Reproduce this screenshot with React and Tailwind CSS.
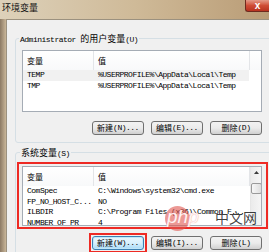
const mono = "font-['Liberation_Mono',monospace] text-[8px] tracking-[-0.5px]";

function Mix({ text, cjk = "text-[8px]" }) {
  const parts = text.split(/([\u4e00-\u9fff]+)/).filter(Boolean);
  return (
    <>
      {parts.map((p, i) =>
        /[\u4e00-\u9fff]/.test(p) ? (
          <span key={i} className={`font-['Noto_Sans_CJK_SC',sans-serif] tracking-normal ${cjk}`}>{p}</span>
        ) : (
          <span key={i} className={mono}>{p}</span>
        )
      )}
    </>
  );
}

function Button({ label, focus }) {
  return (
    <div
      className={`w-[52px] h-[14px] rounded-[3px] border flex items-center justify-center whitespace-nowrap leading-[12px] text-black ${
        focus
          ? "border-[#3c7fb1] bg-gradient-to-b from-[#eaf6fd] via-[#d9f0fc] to-[#a7d9f5] shadow-[inset_0_0_0_1px_#bfe6f9]"
          : "border-[#707070] bg-gradient-to-b from-[#f2f2f2] via-[#ebebeb] to-[#d0d0d0]"
      }`}
    >
      <Mix text={label} />
    </div>
  );
}

function ListView({ rows, height, scroll, selected }) {
  return (
    <div className={`w-[240px] ${height} border border-[#a5acb5] bg-white flex overflow-hidden`}>
      <div className="flex-1 flex flex-col">
        <div className="h-[19px] shrink-0 flex bg-gradient-to-b from-white to-[#f8f9fa]">
          <div className="w-[71px] border-r border-[#e3e5e8] pl-[4px] flex items-center">
            <Mix text="变量" />
          </div>
          <div className="w-[156px] border-r border-[#e3e5e8] pl-[4px] flex items-center">
            <Mix text="值" />
          </div>
        </div>
        {rows.map(([name, value], i) => (
          <div
            key={name}
            className={`h-[10.5px] shrink-0 flex items-center whitespace-nowrap leading-[10.5px] text-black ${
              selected === i ? "bg-[#f1f1f1] w-[226px]" : ""
            }`}
          >
            <div className={`w-[71px] pl-[4px] overflow-hidden ${mono}`}>{name}</div>
            <div className={`pl-[4px] ${mono}`}>{value}</div>
          </div>
        ))}
      </div>
      {scroll && (
        <div className="w-[12px] shrink-0 border-l border-[#e6e6e6] bg-gradient-to-r from-[#ebebeb] to-[#f6f6f6] flex flex-col items-center">
          <div className="h-[11px] w-full flex items-center justify-center">
            <svg width="5" height="3" viewBox="0 0 5 3">
              <path d="M0 3 L2.5 0 L5 3 Z" fill="#3a3a3a" />
            </svg>
          </div>
          <div className="mt-[5px] w-[11px] h-[11px] rounded-[2px] border border-[#9a9a9a] bg-gradient-to-r from-[#f7f7f7] to-[#dedede]" />
        </div>
      )}
    </div>
  );
}

export default function App() {
  return (
    <div className="relative w-[269px] h-[252px] overflow-hidden flex flex-col bg-gradient-to-r from-[#ddd1ba] via-[#cfba98] to-[#b99c76]">
      <div className="h-[19px] shrink-0 flex justify-between items-start">
        <div className="pl-[2px] pt-[2px] text-[9px] leading-[11px] text-[#111] font-['Noto_Sans_CJK_SC',sans-serif]">
          环境变量
        </div>
        <div className="w-[24px] h-[12px] rounded-bl-[3px] border-l border-b border-[#6e2a1e] bg-gradient-to-b from-[#e39a88] via-[#cf4d36] to-[#b8321f] flex items-center justify-center text-white text-[10px] leading-[10px] font-bold font-['Liberation_Sans',sans-serif]">
          x
        </div>
      </div>
      <div className="flex-1 flex">
        <div className="w-[6px] shrink-0 bg-gradient-to-r from-[#8c7a64] to-[#c9b699]" />
        <div className="flex-1 bg-[#f0f0f0] border-l border-t border-[#9b917f] pl-[8px]">
          <fieldset className="mt-[11px] w-[262px] border border-[#d5dfe5] rounded-[3px] pb-[7px]">
            <legend className="ml-[3px] px-[1px] leading-[10px] text-black whitespace-nowrap">
              <Mix text="Administrator 的用户变量(U)" cjk="text-[9px]" />
            </legend>
            <div className="ml-[6px] mt-[5px] w-[240px]">
              <ListView
                height="h-[62px]"
                selected={0}
                rows={[
                  ["TEMP", "%USERPROFILE%\\AppData\\Local\\Temp"],
                  ["TMP", "%USERPROFILE%\\AppData\\Local\\Temp"],
                ]}
              />
              <div className="mt-[9px] flex">
                <div className="ml-[70px]"><Button label="新建(N)..." /></div>
                <div className="ml-[7px]"><Button label="编辑(E)..." /></div>
                <div className="ml-[7px]"><Button label="删除(D)" /></div>
              </div>
            </div>
          </fieldset>
          <fieldset className="mt-[2px] w-[262px] border border-[#d5dfe5] rounded-[3px] pb-[4px]">
            <legend className="ml-[4px] px-[1px] leading-[10px] text-black whitespace-nowrap">
              <Mix text="系统变量(S)" cjk="text-[9px]" />
            </legend>
            <div className="ml-[1px] mt-[3px] w-[251px] border-2 border-[#ee2a24] pt-[2px] pl-[3px] pb-[1px]">
              <ListView
                height="h-[60px]"
                scroll
                rows={[
                  ["ComSpec", "C:\\Windows\\system32\\cmd.exe"],
                  ["FP_NO_HOST_C...", "NO"],
                  ["ILBDIR", "C:\\Program Files (x86)\\Common F..."],
                  ["NUMBER_OF_PR", "4"],
                ]}
              />
            </div>
            <div className="mt-[4px] flex items-center">
              <div className="ml-[73px] border-2 border-[#ee2a24] p-[1px]">
                <Button label="新建(W)..." focus />
              </div>
              <div className="ml-[4px]"><Button label="编辑(I)..." /></div>
              <div className="ml-[7px]"><Button label="删除(L)" /></div>
            </div>
          </fieldset>
        </div>
      </div>
      <div className="absolute left-[165px] top-[206px] flex items-center pointer-events-none">
        <div className="relative w-[25px] h-[25px] rounded-full bg-[#e0554f]/60">
          <span className="absolute left-[2px] top-[0px] text-[19px] leading-[22px] italic text-white/90 font-['Liberation_Sans',sans-serif] [text-shadow:0_0_1px_#e88]">
            php
          </span>
        </div>
      </div>
      <div className="absolute left-[215px] top-[208px] text-[14px] leading-[18px] text-black/75 font-['Noto_Sans_CJK_SC',sans-serif] pointer-events-none">
        中文网
      </div>
    </div>
  );
}
